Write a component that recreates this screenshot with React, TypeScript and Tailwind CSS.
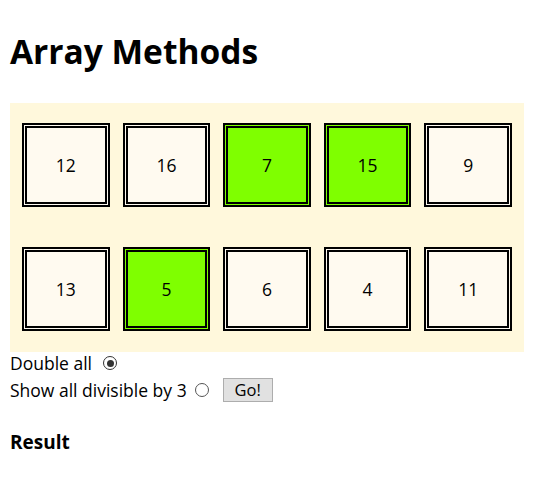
import React from 'react';

const rows: { n: number; on: boolean }[][] = [
  [
    { n: 12, on: false },
    { n: 16, on: false },
    { n: 7, on: true },
    { n: 15, on: true },
    { n: 9, on: false },
  ],
  [
    { n: 13, on: false },
    { n: 5, on: true },
    { n: 6, on: false },
    { n: 4, on: false },
    { n: 11, on: false },
  ],
];

const Radio: React.FC<{ checked?: boolean }> = ({ checked }) => (
  <span
    className={
      checked
        ? 'inline-flex w-[14px] h-[14px] rounded-full border-[1.5px] border-[#333] items-center justify-center bg-white'
        : 'inline-flex w-[14px] h-[14px] rounded-full border border-[#555] items-center justify-center bg-white'
    }
  >
    {checked && <span className="w-[7px] h-[7px] rounded-full bg-[#333]" />}
  </span>
);

export default function App() {
  return (
    <div className="px-[10px] pt-[28px] text-black font-['Open_Sans',sans-serif]">
      <h1 className="text-[33.5px] leading-[46px] font-bold mb-[29px]">Array Methods</h1>

      {/* number grid */}
      <div className="bg-[#fff8dc] pl-[12px] pr-[12px] pt-[20px] pb-[21px] grid grid-cols-5 gap-x-[13px] gap-y-[40px]">
        {rows.flat().map((c, i) => (
          <div
            key={i}
            className={
              (c.on ? 'bg-[#7fff00]' : 'bg-[#fffaf0]') +
              ' h-[84px] border-[5px] border-double border-black flex items-center justify-center text-[17.5px]'
            }
          >
            {c.n}
          </div>
        ))}
      </div>

      {/* controls */}
      <div className="h-[22px] flex items-center text-[17.5px]">
        <span>Double all</span>
        <span className="ml-[11px] flex">
          <Radio checked />
        </span>
      </div>
      <div className="mt-[2px] h-[28px] flex items-center text-[17.5px]">
        <span>Show all divisible by 3</span>
        <span className="ml-[8px] flex">
          <Radio />
        </span>
        <button className="ml-[14px] w-[50px] h-[24px] bg-[#e1e1e1] border border-[#adadad] text-[16.5px] leading-none">
          Go!
        </button>
      </div>

      <h3 className="mt-[25px] text-[19px] leading-[26px] font-bold">Result</h3>
    </div>
  );
}
